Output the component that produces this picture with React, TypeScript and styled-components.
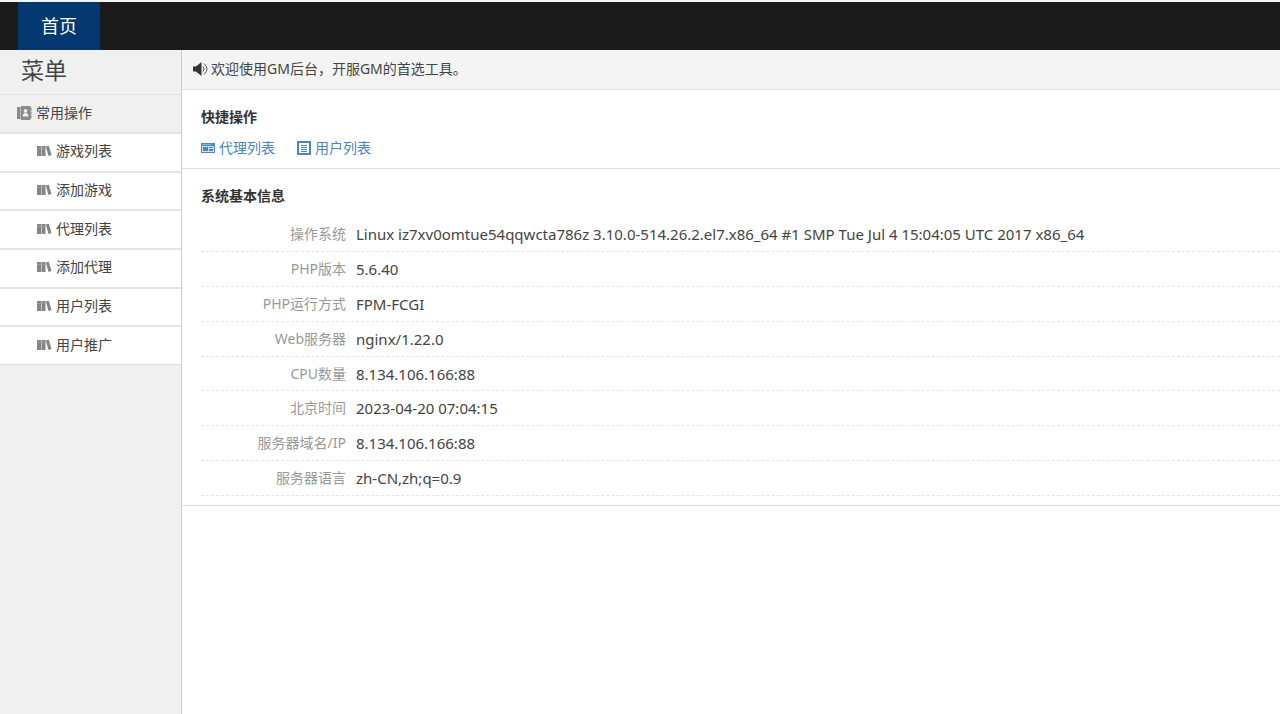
import React from 'react';
import styled, { createGlobalStyle } from 'styled-components';

const GlobalStyle = createGlobalStyle`
  *, *::before, *::after { box-sizing: border-box; }
  body {
    margin: 0;
    background: #fff;
    color: #444;
    font: 14px/20px "Noto Sans", "Noto Sans CJK SC", sans-serif;
  }
  h1, h2, ul, dl, dd, p { margin: 0; padding: 0; }
  ul { list-style: none; }
  a { color: inherit; text-decoration: none; }
`;

const Page = styled.div`
  display: flex;
  flex-direction: column;
  min-height: 100vh;
`;

const TopBar = styled.nav`
  display: flex;
  height: 50px;
  padding-left: 18px;
  border-top: 2px solid #f4f6f6;
  background: #1b1b1b;
`;

const TopLink = styled.a`
  display: flex;
  align-items: center;
  padding: 0 23px;
  background: #043870;
  color: #fff;
  font-size: 18px;
`;

const Body = styled.div`
  display: flex;
  flex: 1;
`;

const Sidebar = styled.aside`
  flex: none;
  width: 182px;
  border-right: 1px solid #ccc;
  background: #f0f0f0;
`;

const MenuTitle = styled.h1`
  height: 45px;
  padding-left: 21px;
  border-bottom: 1px solid #e2e2e2;
  color: #444;
  font-size: 23px;
  font-weight: 400;
  line-height: 41px;
`;

const GroupLink = styled.a`
  display: flex;
  align-items: center;
  gap: 4px;
  height: 37px;
  padding: 0 0 2px 17px;
`;

const MenuList = styled.ul`
  display: grid;
  grid-auto-rows: 1fr;
  height: 233px;
  border-bottom: 1px solid #dedede;
`;

const MenuItem = styled.li`
  display: flex;
  border-top: 2px solid #e4e4e4;
  background: #fff;
`;

const MenuLink = styled.a`
  display: flex;
  flex: 1;
  align-items: center;
  gap: 4px;
  padding: 0 0 2px 37px;
`;

const Main = styled.main`
  flex: 1;
  min-width: 0;
`;

const Notice = styled.p`
  display: flex;
  align-items: center;
  gap: 3px;
  height: 40px;
  padding: 0 0 2px 11px;
  border-bottom: 1px solid #e0e0e0;
  background: #f4f4f4;
`;

const Section = styled.section`
  padding: 17px 0 9px 19px;
  border-bottom: 1px solid #dedede;
`;

const SectionTitle = styled.h2`
  color: #333;
  font-size: 14px;
  line-height: 20px;
`;

const Shortcuts = styled.div`
  display: flex;
  gap: 22px;
  padding: 11px 0 1px;
`;

const Shortcut = styled.a`
  display: flex;
  align-items: center;
  gap: 4px;
  color: #4a86bd;
`;

const InfoList = styled.dl`
  display: grid;
  grid-auto-rows: 1fr;
  height: 290px;
  padding-top: 11px;
`;

const InfoRow = styled.div`
  display: flex;
  gap: 10px;
  border-bottom: 1px dashed #e6e6e6;
  line-height: 34px;
`;

const InfoLabel = styled.dt`
  flex: none;
  width: 145px;
  height: 30px;
  color: #999;
  text-align: right;
`;

const InfoValue = styled.dd`
  height: 30px;
  color: #444;
  font-size: 15px;
  white-space: nowrap;
`;

const Icon = styled.svg`
  flex: none;
  display: block;
`;

const ContactBookIcon = () => (
  <Icon width="15" height="14" viewBox="0 0 15 14" aria-hidden="true">
    <path fill="#8a8a8a" d="M0 1h3v12H0zM4 0H12.500q1 0 1 1V13q0 1-1 1H4z" />
    <path fill="#8a8a8a" d="M13 1.500h1.500v3H13zM13 5.500h1.500v3H13zM13 9.500h1.500v3H13z" />
    <path fill="#b5b5b5" d="M3 1h1v12H3z" />
    <circle cx="8.500" cy="4.800" r="1.900" fill="#f0f0f0" />
    <path fill="#f0f0f0" d="M5.500 10.500q0-3.500 3-3.500t3 3.500z" />
  </Icon>
);

const BooksIcon = () => (
  <Icon width="15" height="12" viewBox="0 0 15 12" aria-hidden="true">
    <path fill="#858585" d="M0 1h4v10H0zM4.500 1h4v10h-4zM8.800 1.500l3-.7 2.700 9.200-3 1z" />
    <path stroke="#9c9c9c" d="M0 3.500h4M4.500 3.500h4" />
  </Icon>
);

const SpeakerIcon = () => (
  <Icon width="15" height="14" viewBox="0 0 15 14" aria-hidden="true">
    <path fill="#333" d="M0 4.500h3L8.500 0v14L3 9.500H0z" />
    <path fill="none" stroke="#555" d="M10 4.500q2 2.500 0 5M11 1.500q6 5.500 0 11" />
  </Icon>
);

const CardIcon = () => (
  <Icon width="14" height="12" viewBox="0 0 14 12" aria-hidden="true">
    <path fill="#4a86bd" d="M0 1h14v10H0z" />
    <path fill="#cfdfee" d="M1 4h12v6H1z" />
    <path fill="#4a86bd" d="M2 5h5v4H2zM8 5h4v1H8zM8 7h4v2H8z" />
    <path stroke="#8fb4d6" d="M1 2.500h9" />
  </Icon>
);

const DocumentIcon = () => (
  <Icon width="14" height="14" viewBox="0 0 14 14" aria-hidden="true">
    <path fill="none" stroke="#4a86bd" strokeWidth="2" d="M1 1h12v12H1z" />
    <path stroke="#4a86bd" d="M4 4.500h6M4 6.500h6M4 8.500h6M4 10.500h6" />
  </Icon>
);

const menuItems = ['游戏列表', '添加游戏', '代理列表', '添加代理', '用户列表', '用户推广'];

const systemInfo: [string, string][] = [
  ['操作系统', 'Linux iz7xv0omtue54qqwcta786z 3.10.0-514.26.2.el7.x86_64 #1 SMP Tue Jul 4 15:04:05 UTC 2017 x86_64'],
  ['PHP版本', '5.6.40'],
  ['PHP运行方式', 'FPM-FCGI'],
  ['Web服务器', 'nginx/1.22.0'],
  ['CPU数量', '8.134.106.166:88'],
  ['北京时间', '2023-04-20 07:04:15'],
  ['服务器域名/IP', '8.134.106.166:88'],
  ['服务器语言', 'zh-CN,zh;q=0.9'],
];

export default function App() {
  return (
    <Page lang="zh-CN">
      <GlobalStyle />
      <TopBar>
        <TopLink href="#home">首页</TopLink>
      </TopBar>
      <Body>
        <Sidebar>
          <MenuTitle>菜单</MenuTitle>
          <GroupLink href="#common">
            <ContactBookIcon />
            常用操作
          </GroupLink>
          <MenuList>
            {menuItems.map((label) => (
              <MenuItem key={label}>
                <MenuLink href={`#${label}`}>
                  <BooksIcon />
                  {label}
                </MenuLink>
              </MenuItem>
            ))}
          </MenuList>
        </Sidebar>
        <Main>
          <Notice>
            <SpeakerIcon />
            欢迎使用GM后台，开服GM的首选工具。
          </Notice>
          <Section>
            <SectionTitle>快捷操作</SectionTitle>
            <Shortcuts>
              <Shortcut href="#agents">
                <CardIcon />
                代理列表
              </Shortcut>
              <Shortcut href="#users">
                <DocumentIcon />
                用户列表
              </Shortcut>
            </Shortcuts>
          </Section>
          <Section>
            <SectionTitle>系统基本信息</SectionTitle>
            <InfoList>
              {systemInfo.map(([label, value]) => (
                <InfoRow key={label}>
                  <InfoLabel>{label}</InfoLabel>
                  <InfoValue>{value}</InfoValue>
                </InfoRow>
              ))}
            </InfoList>
          </Section>
        </Main>
      </Body>
    </Page>
  );
}
